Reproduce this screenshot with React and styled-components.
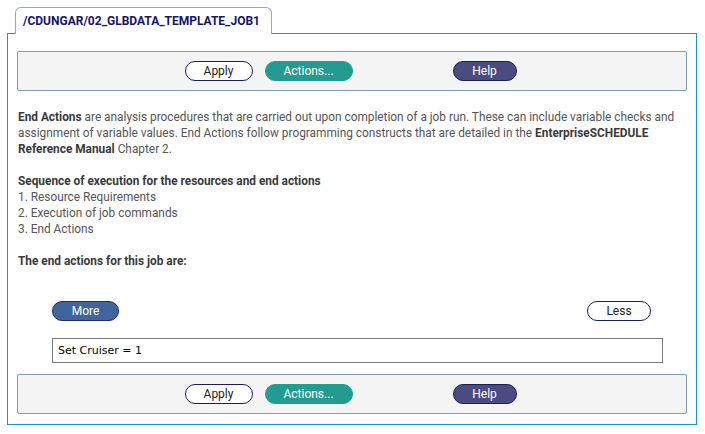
import styled, { createGlobalStyle } from "styled-components";

const GlobalStyle = createGlobalStyle`
  html, body {
    margin: 0;
    background: #ffffff;
  }
  body {
    font-family: Roboto, "Liberation Sans", sans-serif;
  }
`;

const Page = styled.div`
  padding: 7px 8px 0 7px;
`;

const Tab = styled.div`
  position: relative;
  z-index: 1;
  margin-left: 8px;
  margin-bottom: -1px;
  height: 27px;
  width: 257px;
  padding: 0 7px;
  box-sizing: border-box;
  border: 1px solid #6fb3e6;
  border-bottom: none;
  border-radius: 6px 6px 0 0;
  background: #ffffff;
  color: #15156b;
  font-weight: bold;
  font-size: 12px;
  line-height: 27px;
  white-space: nowrap;
`;

const Panel = styled.div`
  border: 1px solid #1796c8;
  padding: 17px 9px 10px 9px;
  height: 392px;
  box-sizing: border-box;
  display: flex;
  flex-direction: column;
  & > * {
    flex-shrink: 0;
  }
`;

const Toolbar = styled.div`
  display: flex;
  align-items: center;
  justify-content: center;
  height: 40px;
  box-sizing: border-box;
  background: #f4f4f4;
  border: 1px solid #7d9db3;
  border-radius: 2px;
  padding-right: 3px;
`;

const variants = {
  plain: { bg: "#ffffff", color: "#222222", border: "#1c1c5c" },
  teal: { bg: "#229b90", color: "#ffffff", border: "#229b90" },
  navy: { bg: "#4b4b80", color: "#ffffff", border: "#1c1c5c" },
  blue: { bg: "#40659a", color: "#ffffff", border: "#1c2c6c" },
};

const Button = styled.button`
  height: 20px;
  width: ${(p) => p.$w}px;
  margin-left: ${(p) => p.$ml || 0}px;
  padding: 0;
  box-sizing: border-box;
  border-radius: 10px;
  border: 1px solid ${(p) => variants[p.$v].border};
  background: ${(p) => variants[p.$v].bg};
  color: ${(p) => variants[p.$v].color};
  font-family: Roboto, "Liberation Sans", sans-serif;
  font-size: 12px;
  line-height: 18px;
`;

const Body = styled.div`
  padding: 18px 0 0 1px;
  color: #555555;
  font-size: 11.85px;
  line-height: 16px;
`;

const Para = styled.p`
  margin: 0 0 16px 0;
`;

const Strong = styled.b`
  color: #3a3a3a;
`;

const ButtonRow = styled.div`
  display: flex;
  justify-content: space-between;
  margin: 16px 36px 0 35px;
`;

const Field = styled.div`
  margin: 17px 24px 0 35px;
  height: 25px;
  box-sizing: border-box;
  border: 1px solid #7a7a7a;
  padding-left: 5px;
  font-family: "DejaVu Sans", Verdana, sans-serif;
  font-size: 11px;
  line-height: 23px;
  color: #000000;
`;

const Spacer = styled.div`
  flex: 1;
`;

const Actions = () => (
  <Toolbar>
    <Button $v="plain" $w={68}>Apply</Button>
    <Button $v="teal" $w={88} $ml={12}>Actions...</Button>
    <Button $v="navy" $w={64} $ml={100}>Help</Button>
  </Toolbar>
);

export default function App() {
  return (
    <Page>
      <GlobalStyle />
      <Tab>/CDUNGAR/02_GLBDATA_TEMPLATE_JOB1</Tab>
      <Panel>
        <Actions />
        <Body>
          <Para>
            <Strong>End Actions</Strong> are analysis procedures that are carried out upon completion of a job run. These can include variable checks and assignment of variable values. End Actions follow programming constructs that are detailed in the <Strong>EnterpriseSCHEDULE Reference Manual</Strong> Chapter 2.
          </Para>
          <Para>
            <Strong>Sequence of execution for the resources and end actions</Strong>
            <br />1. Resource Requirements
            <br />2. Execution of job commands
            <br />3. End Actions
          </Para>
          <Para>
            <Strong>The end actions for this job are:</Strong>
          </Para>
        </Body>
        <ButtonRow>
          <Button $v="blue" $w={67}>More</Button>
          <Button $v="plain" $w={64}>Less</Button>
        </ButtonRow>
        <Field>Set Cruiser = 1</Field>
        <Spacer />
        <Actions />
      </Panel>
    </Page>
  );
}
